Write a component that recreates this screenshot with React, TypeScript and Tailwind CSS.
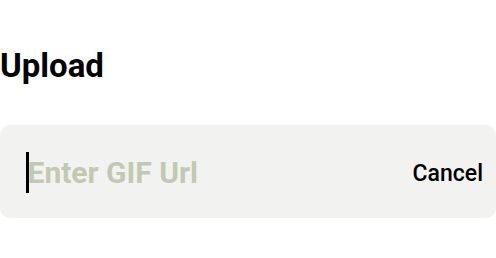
export default function App() {
  return (
    <div className="w-[496px] h-[258px] bg-white font-['Roboto',sans-serif]">
      <h1 className="pt-[49px] text-[33px] leading-[33px] font-bold text-black">Upload</h1>
      <div className="mt-[43px] h-[93px] rounded-[10px] bg-[#f2f3f1] flex items-center pl-[26px] pr-[13px] pt-[2px]">
        <span className="w-[2.5px] h-[41px] bg-black shrink-0" />
        <input
          className="flex-1 min-w-0 -ml-[1px] bg-transparent outline-none text-[30px] font-bold text-black placeholder:text-[#c3c8b4]"
          placeholder="Enter GIF Url"
        />
        <button className="mt-[3px] text-[23px] font-medium text-black">Cancel</button>
      </div>
    </div>
  );
}
